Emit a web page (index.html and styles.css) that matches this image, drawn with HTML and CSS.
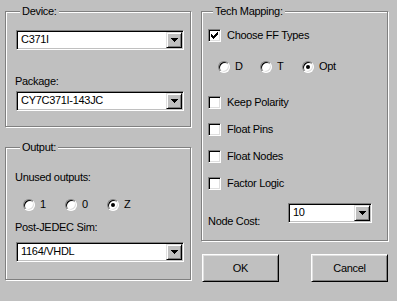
FILE: index.html
```html
<!DOCTYPE HTML>
<html lang="en">

<head>
    <title>Device Options</title>
    <meta charset="utf-8">
    <link rel="stylesheet" href="styles.css">
</head>

<body>

    <div class="dialog">

        <div class="col col-left">
            <fieldset class="group group-device">
                <legend>Device:</legend>
                <div class="combo combo-wide">
                    <span class="combo-text">C371I</span>
                    <span class="combo-btn"><svg width="7" height="4" viewBox="0 0 7 4"><path d="M0 0h7v1h-1v1h-1v1h-1v1h-1v-1h-1v-1h-1v-1h-1z" fill="#000"/></svg></span>
                </div>
                <div class="label label-package">Package:</div>
                <div class="combo combo-wide combo-package">
                    <span class="combo-text">CY7C371I-143JC</span>
                    <span class="combo-btn"><svg width="7" height="4" viewBox="0 0 7 4"><path d="M0 0h7v1h-1v1h-1v1h-1v1h-1v-1h-1v-1h-1v-1h-1z" fill="#000"/></svg></span>
                </div>
            </fieldset>

            <fieldset class="group group-output">
                <legend>Output:</legend>
                <div class="label label-unused">Unused outputs:</div>
                <div class="radio-row radio-row-output">
                    <span class="radio"><span class="radio-dot"></span>1</span>
                    <span class="radio"><span class="radio-dot"></span>0</span>
                    <span class="radio"><span class="radio-dot checked"></span>Z</span>
                </div>
                <div class="label label-sim">Post-JEDEC Sim:</div>
                <div class="combo combo-wide combo-sim">
                    <span class="combo-text">1164/VHDL</span>
                    <span class="combo-btn"><svg width="7" height="4" viewBox="0 0 7 4"><path d="M0 0h7v1h-1v1h-1v1h-1v1h-1v-1h-1v-1h-1v-1h-1z" fill="#000"/></svg></span>
                </div>
            </fieldset>
        </div>

        <div class="col col-right">
            <fieldset class="group group-tech">
                <legend>Tech Mapping:</legend>
                <div class="check check-first">
                    <span class="check-box"><svg width="11" height="11" viewBox="0 0 11 11"><path d="M2 4h1v1h1v1h1v-1h1v-1h1v-1h1v-1h1v3h-1v1h-1v1h-1v1h-1v1h-1v-1h-1v-1h-1z" fill="#000"/></svg></span>
                    Choose FF Types
                </div>
                <div class="radio-row radio-row-tech">
                    <span class="radio"><span class="radio-dot"></span>D</span>
                    <span class="radio"><span class="radio-dot"></span>T</span>
                    <span class="radio"><span class="radio-dot checked"></span>Opt</span>
                </div>
                <div class="check check-polarity"><span class="check-box"></span>Keep Polarity</div>
                <div class="check"><span class="check-box"></span>Float Pins</div>
                <div class="check"><span class="check-box"></span>Float Nodes</div>
                <div class="check"><span class="check-box"></span>Factor Logic</div>
                <div class="cost-row">
                    <span class="cost-label">Node Cost:</span>
                    <div class="combo combo-cost">
                        <span class="combo-text">10</span>
                        <span class="combo-btn"><svg width="7" height="4" viewBox="0 0 7 4"><path d="M0 0h7v1h-1v1h-1v1h-1v1h-1v-1h-1v-1h-1v-1h-1z" fill="#000"/></svg></span>
                    </div>
                </div>
            </fieldset>

            <div class="buttons">
                <div class="button">OK</div>
                <div class="button">Cancel</div>
            </div>
        </div>

    </div>

</body>

</html>
```

FILE: styles.css
```css
html {
    height: 100%;
}
body {
    margin: 0;
    padding: 0;
    background: #c0c0c0;
    color: #000;
    font-family: "Liberation Sans", Arial, sans-serif;
    font-size: 11px;
    line-height: 13px;
    letter-spacing: -0.3px;
    height: 100%;
}
.dialog {
    display: flex;
    gap: 10px;
    padding-left: 5px;
}
.col {
    display: flex;
    flex-direction: column;
}
.col-left {
    width: 186px;
}
.col-right {
    width: 187px;
}

/* etched group box */
.group {
    margin: 5px 0 0;
    padding: 0;
    min-width: 0;
    border: 1px solid #808080;
    box-shadow: inset 1px 1px #fff, 1px 1px #fff;
}
.group legend {
    margin-left: 5px;
    padding: 0 2px;
    background: #c0c0c0;
}
.group-device {
    padding: 0 0 15px 9px;
}
.group-device .combo {
    margin-top: 12px;
}
.group-device .combo-package {
    margin-top: 3px;
}
.label-package {
    margin-top: 25px;
}
.group-output {
    margin-top: 14px;
    padding: 0 0 17px 9px;
}
.label-unused {
    margin-top: 17px;
}
.label-sim {
    margin-top: 10px;
}
.group-output .combo-sim {
    margin-top: 8px;
}
.group-tech {
    padding: 0 0 12px 6px;
}

/* combo box */
.combo {
    display: flex;
    height: 20px;
    box-sizing: border-box;
    background: #fff;
    border: 1px solid;
    border-color: #808080 #fff #fff #808080;
    box-shadow: inset 1px 1px #000, inset -1px -1px #c0c0c0;
    padding: 1px;
}
.combo-wide {
    width: 168px;
    margin-left: 1px;
}
.combo-text {
    flex: 1;
    padding: 1px 0 0 3px;
    line-height: 13px;
}
.combo-btn {
    width: 16px;
    height: 16px;
    box-sizing: border-box;
    display: flex;
    align-items: center;
    justify-content: center;
    background: #c0c0c0;
    border: 1px solid;
    border-color: #dfdfdf #000 #000 #dfdfdf;
    box-shadow: inset 1px 1px #fff, inset -1px -1px #808080;
}
.combo-btn svg {
    display: block;
}

/* radio buttons */
.radio-row {
    display: flex;
    height: 13px;
}
.radio-row-output {
    margin: 14px 0 0 8px;
}
.radio-row-tech {
    margin: 18px 0 0 10px;
}
.radio {
    display: flex;
    align-items: center;
    width: 42px;
}
.radio-dot {
    width: 12px;
    height: 12px;
    box-sizing: border-box;
    border-radius: 50%;
    background: #fff;
    border: 1px solid;
    border-color: #808080 #fff #fff #808080;
    box-shadow: inset 1px 1px #000, inset -1px -1px #dfdfdf;
    margin-right: 5px;
    display: flex;
    align-items: center;
    justify-content: center;
}
.radio-dot.checked::after {
    content: "";
    width: 4px;
    height: 4px;
    border-radius: 50%;
    background: #000;
}

/* check boxes */
.check {
    display: flex;
    align-items: center;
    height: 13px;
    margin-top: 14px;
}
.check-first {
    margin-top: 11px;
}
.check-polarity {
    margin-top: 23px;
}
.check-box {
    width: 13px;
    height: 13px;
    box-sizing: border-box;
    background: #fff;
    border: 1px solid;
    border-color: #808080 #fff #fff #808080;
    box-shadow: inset 1px 1px #000, inset -1px -1px #dfdfdf;
    margin-right: 6px;
}
.check-box svg {
    display: block;
}

.cost-row {
    display: flex;
    margin-top: 13px;
}
.cost-label {
    width: 80px;
    margin-top: 12px;
}
.combo-cost {
    width: 84px;
}

/* push buttons */
.buttons {
    display: flex;
    justify-content: space-between;
    margin-top: 13px;
    padding-left: 1px;
}
.button {
    width: 77px;
    height: 28px;
    box-sizing: border-box;
    display: flex;
    align-items: center;
    justify-content: center;
    border: 1px solid;
    border-color: #fff #000 #000 #fff;
    box-shadow: inset 1px 1px #dfdfdf, inset -1px -1px #808080;
}
```
